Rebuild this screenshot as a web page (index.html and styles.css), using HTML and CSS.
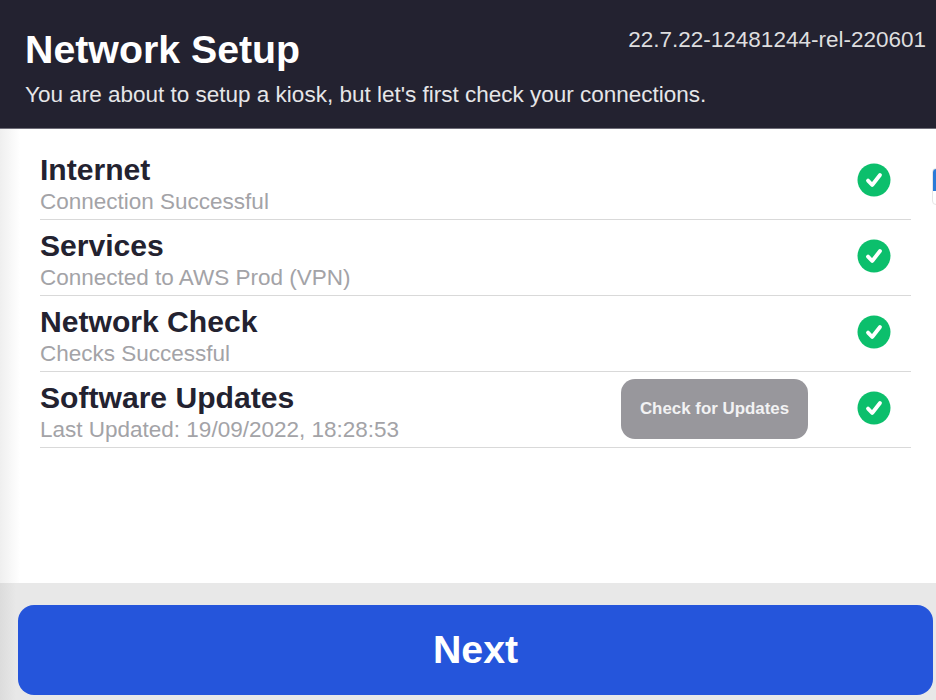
FILE: index.html
```html
<!DOCTYPE html>
<html lang="en">
<head>
    <meta charset="UTF-8">
    <title>Network Setup</title>
    <link rel="stylesheet" href="styles.css">
</head>
<body>
    <div class="screen">
        <header class="top-bar">
            <div class="top-row">
                <h1>Network Setup</h1>
                <span class="version">22.7.22-12481244-rel-220601</span>
            </div>
            <p class="intro">You are about to setup a kiosk, but let's first check your connections.</p>
        </header>

        <main class="checks">
            <div class="peek-card"></div>

            <div class="check-row">
                <div class="check-text">
                    <div class="check-title">Internet</div>
                    <div class="check-sub">Connection Successful</div>
                </div>
                <svg class="tick" viewBox="0 0 34 34"><circle cx="17" cy="17" r="16.5" fill="#0cbf6c"/><path d="M11 17.6l4.2 4.4 7.8-10" fill="none" stroke="#fff" stroke-width="3.8" stroke-linecap="round" stroke-linejoin="round"/></svg>
            </div>

            <div class="check-row">
                <div class="check-text">
                    <div class="check-title">Services</div>
                    <div class="check-sub">Connected to AWS Prod (VPN)</div>
                </div>
                <svg class="tick" viewBox="0 0 34 34"><circle cx="17" cy="17" r="16.5" fill="#0cbf6c"/><path d="M11 17.6l4.2 4.4 7.8-10" fill="none" stroke="#fff" stroke-width="3.8" stroke-linecap="round" stroke-linejoin="round"/></svg>
            </div>

            <div class="check-row">
                <div class="check-text">
                    <div class="check-title">Network Check</div>
                    <div class="check-sub">Checks Successful</div>
                </div>
                <svg class="tick" viewBox="0 0 34 34"><circle cx="17" cy="17" r="16.5" fill="#0cbf6c"/><path d="M11 17.6l4.2 4.4 7.8-10" fill="none" stroke="#fff" stroke-width="3.8" stroke-linecap="round" stroke-linejoin="round"/></svg>
            </div>

            <div class="check-row">
                <div class="check-text">
                    <div class="check-title">Software Updates</div>
                    <div class="check-sub">Last Updated: 19/09/2022, 18:28:53</div>
                </div>
                <button class="update-button">Check for Updates</button>
                <svg class="tick" viewBox="0 0 34 34"><circle cx="17" cy="17" r="16.5" fill="#0cbf6c"/><path d="M11 17.6l4.2 4.4 7.8-10" fill="none" stroke="#fff" stroke-width="3.8" stroke-linecap="round" stroke-linejoin="round"/></svg>
            </div>
        </main>

        <footer class="bottom-bar">
            <button class="next-button">Next</button>
        </footer>
    </div>
</body>
</html>
```

FILE: styles.css
```css
html, body {
    margin: 0;
    height: 100%;
    overflow: hidden;
}

body {
    font-family: 'Liberation Sans', Arial, sans-serif;
    background-color: #ffffff;
}

.screen {
    display: flex;
    flex-direction: column;
    height: 700px;
}

.top-bar {
    box-sizing: border-box;
    height: 129px;
    padding: 25px 10px 0 25px;
    background-color: #232230;
    border-bottom: 1px solid #6e6d78;
    color: #ffffff;
}

.top-row {
    display: flex;
    justify-content: space-between;
    align-items: flex-start;
}

h1 {
    margin: 0;
    font-size: 39.3px;
    line-height: 48px;
    font-weight: 700;
}

.version {
    font-size: 22.5px;
    line-height: 30px;
    color: #dededf;
}

.intro {
    margin: 8px 0 0;
    font-size: 22.5px;
    line-height: 28px;
    color: #e6e6e8;
}

.checks {
    position: relative;
    box-sizing: border-box;
    height: 454px;
    padding: 15px 25px 0 40px;
    background: linear-gradient(to right, #efefef, #ffffff 20px);
}

.peek-card {
    position: absolute;
    top: 39px;
    right: -8px;
    width: 10px;
    height: 35px;
    border: 1px solid #e6e6e6;
    border-radius: 4px;
    background: linear-gradient(to bottom, #2a7ad8 22px, #ffffff 22px);
}

.check-row {
    display: flex;
    align-items: center;
    box-sizing: border-box;
    height: 76px;
    padding-right: 20px;
    border-bottom: 1px solid #d9d9d9;
}

.check-text {
    flex: 1;
    padding-top: 6px;
}

.check-title {
    font-size: 30.1px;
    line-height: 34px;
    font-weight: 700;
    color: #232230;
}

.check-sub {
    font-size: 22.5px;
    line-height: 29px;
    color: #a3a3a7;
}

.tick {
    width: 34px;
    height: 34px;
    margin-bottom: 3px;
}

.update-button {
    width: 187px;
    height: 60px;
    margin: 0 49px 1px 0;
    border: none;
    border-radius: 14px;
    background-color: #98979c;
    color: #f2f2f3;
    font-family: inherit;
    font-size: 16.9px;
    font-weight: 700;
}

.bottom-bar {
    flex: 1;
    padding: 22px 3px 5px 18px;
    background: linear-gradient(to right, #dcdcdc, #e8e8e8 16px);
    display: flex;
}

.next-button {
    flex: 1;
    padding-bottom: 3px;
    border: none;
    border-radius: 16px;
    background-color: #2555db;
    color: #ffffff;
    font-family: inherit;
    font-size: 39.3px;
    font-weight: 700;
}
```
